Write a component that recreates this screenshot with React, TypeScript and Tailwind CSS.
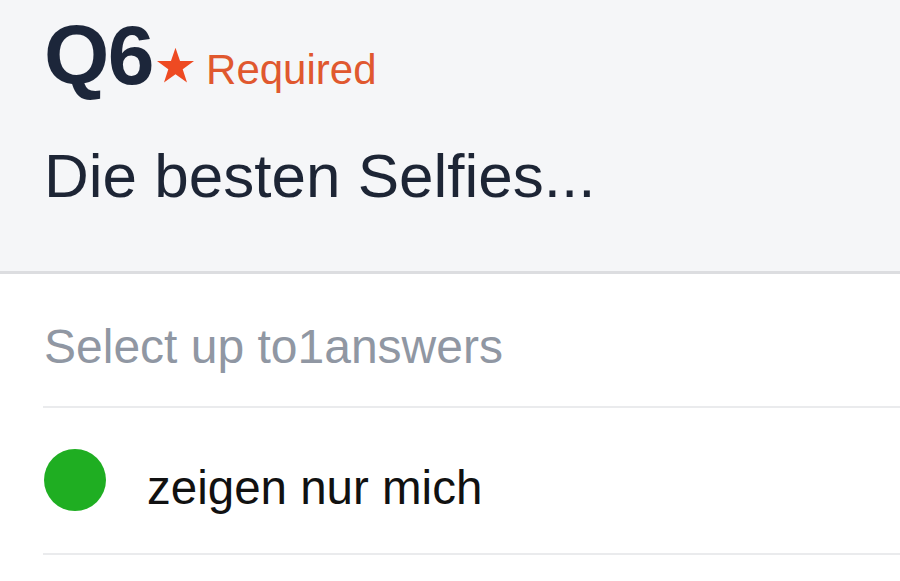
export default function App() {
  return (
    <div className="min-h-[581px] w-[900px] bg-white font-['Liberation_Sans',Arial,sans-serif] overflow-hidden">
      {/* Question header */}
      <div className="bg-[#f5f6f8] border-b-[3px] border-[#dcdde0] pl-[44px] pt-[13px] pb-[64px]">
        <div className="flex items-baseline">
          <span className="text-[84px] leading-none font-bold text-[#1c263a] tracking-[-1.5px]">Q6</span>
          <svg className="ml-[3px] mb-[2px] w-[39px] h-[37px]" viewBox="0 0 24 23" aria-hidden="true">
            <path
              d="M12 0.5l2.82 8.2h8.68l-7.02 5.1 2.68 8.3L12 17l-7.16 5.1 2.68-8.3L0.5 8.7h8.68z"
              fill="#ee4a22"
            />
          </svg>
          <span className="ml-[11px] text-[42px] leading-none text-[#e0582f]">Required</span>
        </div>
        <h1 className="mt-[48px] text-[62px] leading-none text-[#1d2535]">Die besten Selfies...</h1>
      </div>

      {/* Answers */}
      <div className="pt-[49px]">
        <p className="pl-[44px] text-[48px] leading-none text-[#9097a3]">Select up to1answers</p>
        <div className="ml-[43px] mt-[35px] border-t-2 border-[#eaebed]">
          <div className="flex items-start pt-[41px] pb-[41px] border-b-2 border-[#eaebed]">
            <div className="ml-[1px] w-[62px] h-[62px] rounded-full bg-[#1fae22]" />
            <span className="ml-[41px] mt-[15px] text-[47.5px] leading-none text-[#111111]">zeigen nur mich</span>
          </div>
        </div>
      </div>
    </div>
  )
}
